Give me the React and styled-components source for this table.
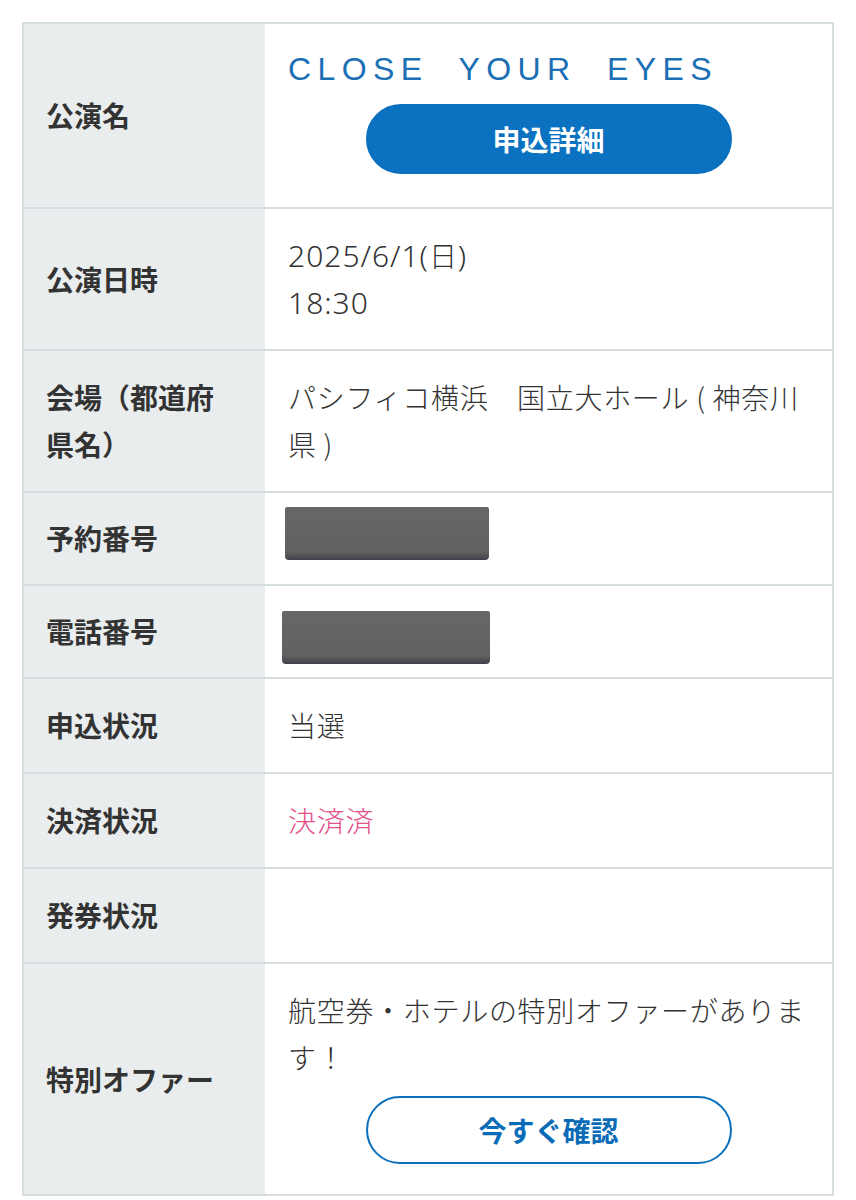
import React from "react";
import styled, { createGlobalStyle } from "styled-components";

const GlobalStyle = createGlobalStyle`
  html, body {
    margin: 0;
    padding: 0;
    background: #ffffff;
  }
  body {
    font-family: "Noto Sans CJK JP", "Noto Sans", sans-serif;
    color: #333333;
  }
`;

const Page = styled.div`
  padding: 22px;
`;

const Table = styled.div`
  border: 2px solid #d6dddf;
`;

const Row = styled.div`
  display: grid;
  grid-template-columns: 241px 1fr;
  border-top: ${props => (props.first ? "none" : "2px solid #d6dddf")};
`;

const Label = styled.div`
  background: #e9edee;
  padding: 0 30px 0 22px;
  display: flex;
  align-items: center;
  font-size: 28px;
  line-height: 47px;
  font-weight: 700;
  color: #333333;
`;

const Value = styled.div`
  padding: ${props => props.pad || "23px 23px"};
  display: flex;
  flex-direction: column;
  justify-content: center;
  min-height: 47px;
  font-size: 28px;
  line-height: 47px;
  font-weight: 300;
  letter-spacing: 0.7px;
  color: ${props => props.color || "#333333"};
`;

const Num = styled.span`
  font-family: "Noto Sans", "Noto Sans CJK JP", sans-serif;
  font-size: 30px;
  letter-spacing: 1px;
`;

const Title = styled.div`
  font-family: "Liberation Sans", Arial, sans-serif;
  font-size: 32px;
  line-height: 46px;
  font-weight: 400;
  letter-spacing: 6.4px;
  white-space: pre;
  color: #1a6fb5;
`;

const PillButton = styled.button`
  display: block;
  box-sizing: border-box;
  width: 366px;
  height: ${props => (props.outline ? "68px" : "70px")};
  margin: ${props => (props.outline ? "15px" : "12px")} auto 0;
  border-radius: 36px;
  border: 2px solid #0a70bd;
  background: ${props => (props.outline ? "#ffffff" : "#0a72c1")};
  color: ${props => (props.outline ? "#0a6cb6" : "#ffffff")};
  font-family: "Noto Sans CJK JP", sans-serif;
  font-size: 28px;
  font-weight: 700;
  letter-spacing: 0;
  cursor: pointer;
`;

const Redacted = styled.div`
  width: ${props => props.w}px;
  height: 53px;
  margin-left: ${props => props.shift}px;
  border-radius: 2px 2px 4px 4px;
  background: linear-gradient(to bottom, #676767 0%, #616161 85%, #3f4048 100%);
`;

export default function App() {
  return (
    <Page>
      <GlobalStyle />
      <Table>
        <Row first>
          <Label>公演名</Label>
          <Value pad="22px 23px 33px">
            <Title>{"CLOSE  YOUR  EYES"}</Title>
            <PillButton>申込詳細</PillButton>
          </Value>
        </Row>
        <Row>
          <Label>公演日時</Label>
          <Value>
            <div>
              <Num>2025/6/1(</Num>日<Num>)</Num>
            </div>
            <div>
              <Num>18:30</Num>
            </div>
          </Value>
        </Row>
        <Row>
          <Label>会場（都道府県名）</Label>
          <Value>
            <div>パシフィコ横浜　国立大ホール ( 神奈川県 )</div>
          </Value>
        </Row>
        <Row>
          <Label>予約番号</Label>
          <Value pad="14px 23px 24px">
            <Redacted w={204} shift={-3} />
          </Value>
        </Row>
        <Row>
          <Label>電話番号</Label>
          <Value pad="25px 23px 13px">
            <Redacted w={208} shift={-6} />
          </Value>
        </Row>
        <Row>
          <Label>申込状況</Label>
          <Value>当選</Value>
        </Row>
        <Row>
          <Label>決済状況</Label>
          <Value color="#e4508a">決済済</Value>
        </Row>
        <Row>
          <Label>発券状況</Label>
          <Value />
        </Row>
        <Row>
          <Label>特別オファー</Label>
          <Value pad="23px 23px 30px">
            <div>航空券・ホテルの特別オファーがあります！</div>
            <PillButton outline>今すぐ確認</PillButton>
          </Value>
        </Row>
      </Table>
    </Page>
  );
}
